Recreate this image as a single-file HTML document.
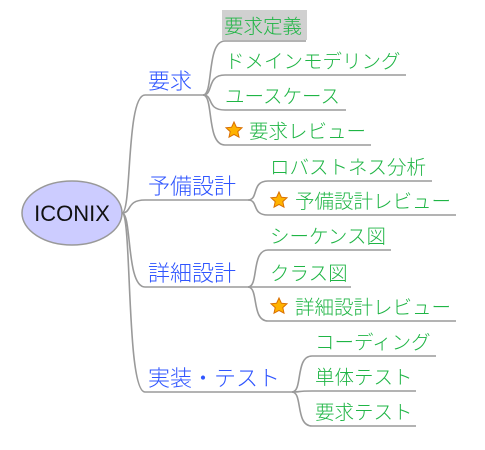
<!DOCTYPE html>
<html><head><meta charset="utf-8"><style>
html,body{margin:0;padding:0;background:#fff;width:485px;height:450px;overflow:hidden}
svg text{font-family:"Liberation Sans","Noto Sans CJK JP",sans-serif;font-weight:300}
.g{fill:#1fb545;font-size:19.5px}
.b{fill:#2f55ff;font-size:22px}
path{fill:none;stroke:#9a9a9a;stroke-width:1.6}
</style></head><body>
<svg width="485" height="450" xmlns="http://www.w3.org/2000/svg">
<defs>
<g id="star"><polygon points="8,0 10.4,5.2 16,5.8 11.8,9.6 13,15.2 8,12.4 3,15.2 4.2,9.6 0,5.8 5.6,5.2" fill="#ffb300" stroke="#d96f00" stroke-width="1"/></g>
</defs>
<path d="M122,213 C132,213 126,95 145,95 L203,95"/>
<path d="M122,213 C132,213 126,200 145,200 L248,200"/>
<path d="M122,213 C132,213 126,287 145,287 L248,287"/>
<path d="M122,213 C132,213 126,392 145,392 L292,392"/>
<path d="M203,95 C214,95 206,41 225,41 L306,41"/>
<path d="M203,95 C214,95 206,75 225,75 L406,75"/>
<path d="M203,95 C214,95 206,110 225,110 L346,110"/>
<path d="M203,95 C214,95 206,145 225,145 L371,145"/>
<path d="M248,200 C259,200 251,181 268,181 L432,181"/>
<path d="M248,200 C259,200 251,215 268,215 L456,215"/>
<path d="M248,287 C259,287 251,250 268,250 L391,250"/>
<path d="M248,287 C259,287 251,287 268,287 L351,287"/>
<path d="M248,287 C259,287 251,321 268,321 L456,321"/>
<path d="M292,392 C303,392 295,356 312,356 L436,356"/>
<path d="M292,392 C303,392 295,391 312,391 L416,391"/>
<path d="M292,392 C303,392 295,426 312,426 L416,426"/>

<ellipse cx="72" cy="213" rx="50" ry="32" fill="#ccccff" stroke="#999" stroke-width="1.5"/>
<text x="72" y="221" text-anchor="middle" font-size="22" fill="#111">ICONIX</text>

<text class="b" x="148" y="89">要求</text>
<text class="b" x="148" y="194">予備設計</text>
<text class="b" x="148" y="281">詳細設計</text>
<text class="b" x="148" y="386">実装・テスト</text>

<rect x="222" y="10" width="85" height="30" fill="#d0d0d0"/>
<text class="g" x="224" y="33">要求定義</text>
<text class="g" x="225" y="68">ドメインモデリング</text>
<text class="g" x="225" y="103">ユースケース</text>
<use href="#star" x="226" y="122"/>
<text class="g" x="249" y="138">要求レビュー</text>

<text class="g" x="270" y="174">ロバストネス分析</text>
<use href="#star" x="271" y="192"/>
<text class="g" x="295" y="208">予備設計レビュー</text>

<text class="g" x="270" y="243">シーケンス図</text>
<text class="g" x="270" y="280">クラス図</text>
<use href="#star" x="271" y="298"/>
<text class="g" x="295" y="314">詳細設計レビュー</text>

<text class="g" x="315" y="349">コーディング</text>
<text class="g" x="315" y="384">単体テスト</text>
<text class="g" x="315" y="419">要求テスト</text>
</svg>
</body></html>
